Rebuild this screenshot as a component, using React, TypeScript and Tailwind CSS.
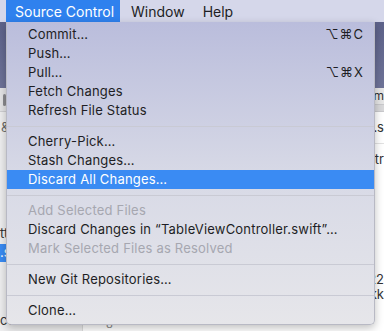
import React from "react";

type Item = { label: string; shortcut?: string; disabled?: boolean; active?: boolean } | "sep";

const items: Item[] = [
    { label: "Commit…", shortcut: "⌥⌘C" },
    { label: "Push…" },
    { label: "Pull…", shortcut: "⌥⌘X" },
    { label: "Fetch Changes" },
    { label: "Refresh File Status" },
    "sep",
    { label: "Cherry-Pick…" },
    { label: "Stash Changes…" },
    { label: "Discard All Changes…", active: true },
    "sep",
    { label: "Add Selected Files", disabled: true },
    { label: "Discard Changes in “TableViewController.swift”…" },
    { label: "Mark Selected Files as Resolved", disabled: true },
    "sep",
    { label: "New Git Repositories…" },
    "sep",
    { label: "Clone…" },
];

function MenuRow({ item }: { item: Item }) {
    if (item === "sep") {
        return (
            <div className="h-[12px] flex items-center">
                <div className="h-px w-full bg-[#c9cad4]" />
            </div>
        );
    }
    let color = "text-[#1e1e24]";
    if (item.disabled) color = "text-[#a6a7b0]";
    if (item.active) color = "text-white bg-[#3a8bf3]";
    return (
        <div className={`h-[19px] flex items-center justify-between pl-[21px] pr-[10px] ${color}`}>
            <span className="tracking-[0.2px]">{item.label}</span>
            {item.shortcut && <span className="tracking-[1px]">{item.shortcut}</span>}
        </div>
    );
}

export default function App() {
    return (
        <div className="relative w-[384px] h-[331px] overflow-hidden bg-white font-['Inter',sans-serif] text-[13px]">
            {/* menu bar */}
            <div className="h-[22px] flex items-stretch pl-[6px] bg-[#d5d7ea] text-[14px] text-[#1e1e24]">
                <div className="w-[114px] pl-[9px] flex items-center bg-[#2f81ee] text-white">Source Control</div>
                <div className="pl-[11px] pr-[9px] flex items-center">Window</div>
                <div className="px-[9px] flex items-center">Help</div>
            </div>

            {/* window underneath */}
            <div className="h-[66px] bg-gradient-to-b from-[#5d628a] to-[#6e7398]" />
            <div className="flex h-[243px]">
                <div className="w-[83px] border-r border-[#dcdcdc] bg-[#eeeeef] flex flex-col text-[13px] text-[#333]">
                    <div className="h-[24px] bg-[#e4e4e6] border-b border-[#cfcfd2] flex items-center pl-[3px]">
                        <div className="w-[3px] h-[12px] bg-[#8a8a8e] rounded-sm" />
                    </div>
                    <div className="h-[32px] flex items-center pl-[1px] text-[#666]">&amp;</div>
                    <div className="h-[80px]" />
                    <div className="h-[20px] flex items-center">tt</div>
                    <div className="h-[18px] bg-[#3a8bf3] text-white flex items-center">.s</div>
                    <div className="flex-1" />
                    <div className="h-[20px] flex items-center">cc</div>
                </div>
                <div className="flex-1 flex flex-col text-[13px] text-[#333]">
                    <div className="h-[16px] bg-[#e6e6e6] flex items-center justify-end text-[12px]">mm</div>
                    <div className="h-[8px] bg-[#d8d8da] border-y border-[#c9c9cc]" />
                    <div className="h-[32px] border-b border-[#e2e2e2] flex items-center justify-end">er.s</div>
                    <div className="h-[32px] flex items-center justify-end">entr</div>
                    <div className="h-[96px]" />
                    <div className="h-[15px] flex items-center justify-end">22</div>
                    <div className="h-[15px] flex items-center justify-end">kk</div>
                    <div className="flex-1" />
                    <div className="h-[12px] pl-[23px] text-[11px] text-[#888] leading-none">8</div>
                </div>
            </div>

            {/* dropdown menu */}
            <div className="absolute left-[6px] top-[22px] w-[369px] pt-[3px] pb-[4px] rounded-b-[5px] bg-gradient-to-b from-[#babddc] via-[#d7d9e6] to-[#e6e6ea] shadow-[0_3px_8px_rgba(0,0,0,0.25)] border border-t-0 border-[#b8b9c4]">
                {items.map((item, i) => (
                    <MenuRow key={i} item={item} />
                ))}
            </div>
        </div>
    );
}
